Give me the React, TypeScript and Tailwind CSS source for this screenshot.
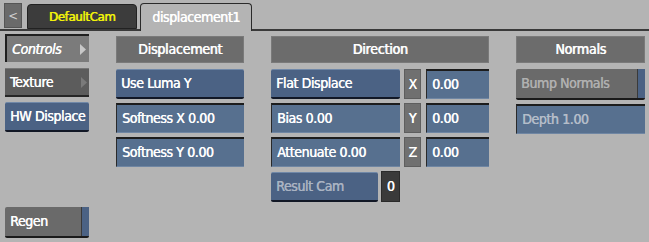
import React from 'react';

// condensed face, thickened a touch with a hairline shadow
const font =
  "font-['DejaVu_Sans_Condensed','Liberation_Sans',sans-serif] tracking-[-0.4px] [text-shadow:0.45px_0_0_currentColor]";

// blue push button
const Blue: React.FC<{ label: string; dim?: boolean; w?: string }> = ({ label, dim, w = 'w-full' }) => (
  <div
    className={`${w} h-[30px] flex items-center px-[5px] whitespace-nowrap rounded-[2px] bg-[#4b6284] border-t border-t-[#7088a8] border-b-2 border-b-[#121826] text-[14px] ${
      dim ? 'text-[#a9b3c2]' : 'text-white'
    }`}
  >
    {label}
  </div>
);

// numeric field
const Field: React.FC<{ label: string; dim?: boolean; w?: string }> = ({ label, dim, w = 'w-full' }) => (
  <div
    className={`${w} h-[30px] flex items-center px-[5px] whitespace-nowrap bg-[#57708f] border-t-2 border-l border-t-[#1c1c1c] border-l-[#2a2a2a] border-b border-b-[#6f86a3] text-[14px] ${
      dim ? 'text-[#b4bdc9]' : 'text-white'
    }`}
  >
    {label}
  </div>
);

const Header: React.FC<{ label: string }> = ({ label }) => (
  <div className="h-[27px] flex items-center justify-center bg-[#6c6c6c] border border-[#7a7a7a] text-white text-[14px] tracking-[-0.2px] [text-shadow:0.7px_0_0_currentColor]">
    {label}
  </div>
);

const GrayStrip: React.FC<{ label: string; dim?: boolean }> = ({ label, dim }) => (
  <div className="h-[31px] flex rounded-[2px] border-b-2 border-b-[#1a1a1a] bg-[#6a6a6a]">
    <div className={`flex-1 flex items-center px-[5px] text-[14px] ${dim ? 'text-[#b0b0b0]' : 'text-white'}`}>{label}</div>
    <div className="w-[8px] bg-[#4b6284] border-l border-l-[#3a3a3a]" />
  </div>
);

const Axis: React.FC<{ a: string }> = ({ a }) => (
  <div className="w-[17px] h-[30px] flex items-center justify-center bg-[#707070] border border-[#5e5e5e] text-white text-[14px]">
    {a}
  </div>
);

const Tri: React.FC<{ color: string }> = ({ color }) => (
  <svg width="6" height="11" viewBox="0 0 6 11">
    <path d="M0 0 L6 5.5 L0 11 Z" fill={color} />
  </svg>
);

export default function App() {
  return (
    <div className={`w-[649px] h-[242px] bg-[#b4b4b4] ${font} flex flex-col overflow-hidden`}>
      {/* tabs */}
      <div className="h-[31px] flex items-end pl-[4px] border-b-2 border-b-[#3a3a3a]">
        <div className="w-[18px] h-[25px] mb-[1px] flex items-center justify-center bg-[#6a6a6a] border border-[#555] text-[#d0d0d0] text-[13px] [text-shadow:none]">
          &lt;
        </div>
        <div className="ml-[5px] w-[110px] h-[25px] flex items-center justify-center rounded-t-[4px] bg-[#3c3c3c] border border-[#222] text-[#f2f20a] text-[13px] tracking-[-0.3px] [text-shadow:0.7px_0_0_currentColor]">
          DefaultCam
        </div>
        <div className="ml-[3px] w-[112px] h-[28px] -mb-[2px] flex items-center justify-center rounded-t-[4px] bg-[#b4b4b4] border-t border-x border-[#2a2a2a] text-white text-[14px]">
          displacement1
        </div>
      </div>

      <div className="flex-1 flex pl-[5px] gap-[27px]">
        {/* left column */}
        <div className="w-[84px] flex flex-col pt-[3px] pb-[4px]">
          <div className="h-[28px] flex items-center justify-between pl-[5px] pr-[3px] bg-[#7b7b7b] border-t-2 border-l-2 border-[#202020] text-white text-[14px] italic">
            Controls
            <Tri color="#c8c8c8" />
          </div>
          <div className="mt-[6px] h-[29px] flex items-center justify-between pl-[5px] pr-[2px] bg-[#5c5c5c] border-t border-t-[#777] border-b-2 border-b-[#262626] text-white text-[14px]">
            Texture
            <Tri color="#7a7a7a" />
          </div>
          <div className="mt-[5px]">
            <Blue label="HW Displace" />
          </div>
          <div className="mt-auto">
            <GrayStrip label="Regen" />
          </div>
        </div>

        {/* displacement */}
        <div className="w-[128px] flex flex-col gap-[4px] pt-[5px]">
          <div className="mb-[2px]">
            <Header label="Displacement" />
          </div>
          <Blue label="Use Luma Y" />
          <Field label="Softness X 0.00" />
          <Field label="Softness Y 0.00" />
        </div>

        {/* direction */}
        <div className="w-[218px] flex flex-col gap-[4px] pt-[5px]">
          <div className="mb-[2px]">
            <Header label="Direction" />
          </div>
          {[
            ['Flat Displace', 'X'],
            ['Bias 0.00', 'Y'],
            ['Attenuate 0.00', 'Z'],
          ].map(([l, a], i) => (
            <div key={a} className="flex items-center">
              {i === 0 ? <Blue label={l} w="w-[129px]" /> : <Field label={l} w="w-[129px]" />}
              <div className="ml-[4px]">
                <Axis a={a} />
              </div>
              <div className="ml-[5px]">
                <Field label="0.00" w="w-[63px]" />
              </div>
            </div>
          ))}
          <div className="flex items-center">
            <Blue label="Result Cam" dim w="w-[107px]" />
            <div className="ml-[3px] w-[19px] h-[31px] flex items-center justify-center bg-[#3a3a3a] border border-[#2a2a2a] text-white text-[14px]">
              0
            </div>
          </div>
        </div>

        {/* normals */}
        <div className="w-[129px] flex flex-col gap-[4px] pt-[5px]">
          <div className="mb-[2px]">
            <Header label="Normals" />
          </div>
          <GrayStrip label="Bump Normals" dim />
          <Field label="Depth 1.00" dim />
        </div>
      </div>
    </div>
  );
}
